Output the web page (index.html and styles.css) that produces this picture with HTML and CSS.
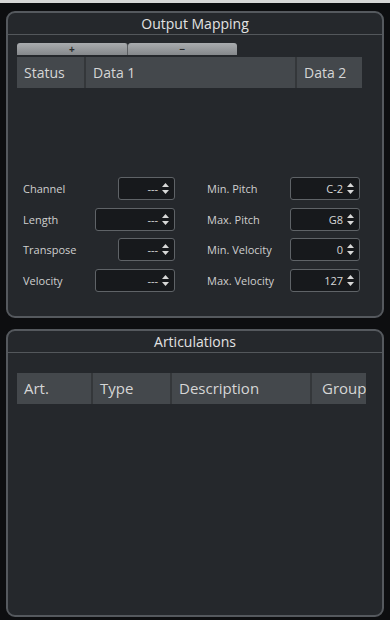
FILE: index.html
```html
<!DOCTYPE html>
<html lang="en">
<head>
  <meta charset="UTF-8">
  <title>Expression Map</title>
  <meta name="viewport" content="width=device-width, initial-scale=1.0">
  <link rel="stylesheet" href="styles.css">
</head>
<body>
  <div class="topline"></div>
  <div class="wrap">
    <div class="panel panel-output">
      <div class="panel-title">Output Mapping</div>
      <div class="panel-body">
        <div class="btnbar">
          <button class="tb">+</button>
          <button class="tb">&minus;</button>
        </div>
        <div class="thead thead-out">
          <div class="th c-status">Status</div>
          <div class="th c-data1">Data 1</div>
          <div class="th c-data2">Data 2</div>
        </div>

        <div class="fields">
          <div class="row">
            <span class="lbl">Channel</span>
            <div class="spin w57"><span class="val">---</span><svg class="arr" width="7" height="11" viewBox="0 0 7 11"><path d="M3.5 0 L7 4 L0 4 Z M0 7 L7 7 L3.5 11 Z" fill="#d8d8d8"/></svg></div>
          </div>
          <div class="row">
            <span class="lbl">Min. Pitch</span>
            <div class="spin w70"><span class="val">C-2</span><svg class="arr" width="7" height="11" viewBox="0 0 7 11"><path d="M3.5 0 L7 4 L0 4 Z M0 7 L7 7 L3.5 11 Z" fill="#d8d8d8"/></svg></div>
          </div>
          <div class="row">
            <span class="lbl">Length</span>
            <div class="spin w80"><span class="val">---</span><svg class="arr" width="7" height="11" viewBox="0 0 7 11"><path d="M3.5 0 L7 4 L0 4 Z M0 7 L7 7 L3.5 11 Z" fill="#d8d8d8"/></svg></div>
          </div>
          <div class="row">
            <span class="lbl">Max. Pitch</span>
            <div class="spin w70"><span class="val">G8</span><svg class="arr" width="7" height="11" viewBox="0 0 7 11"><path d="M3.5 0 L7 4 L0 4 Z M0 7 L7 7 L3.5 11 Z" fill="#d8d8d8"/></svg></div>
          </div>
          <div class="row">
            <span class="lbl">Transpose</span>
            <div class="spin w57"><span class="val">---</span><svg class="arr" width="7" height="11" viewBox="0 0 7 11"><path d="M3.5 0 L7 4 L0 4 Z M0 7 L7 7 L3.5 11 Z" fill="#d8d8d8"/></svg></div>
          </div>
          <div class="row">
            <span class="lbl">Min. Velocity</span>
            <div class="spin w70"><span class="val">0</span><svg class="arr" width="7" height="11" viewBox="0 0 7 11"><path d="M3.5 0 L7 4 L0 4 Z M0 7 L7 7 L3.5 11 Z" fill="#d8d8d8"/></svg></div>
          </div>
          <div class="row">
            <span class="lbl">Velocity</span>
            <div class="spin w80"><span class="val">---</span><svg class="arr" width="7" height="11" viewBox="0 0 7 11"><path d="M3.5 0 L7 4 L0 4 Z M0 7 L7 7 L3.5 11 Z" fill="#d8d8d8"/></svg></div>
          </div>
          <div class="row">
            <span class="lbl">Max. Velocity</span>
            <div class="spin w70"><span class="val">127</span><svg class="arr" width="7" height="11" viewBox="0 0 7 11"><path d="M3.5 0 L7 4 L0 4 Z M0 7 L7 7 L3.5 11 Z" fill="#d8d8d8"/></svg></div>
          </div>
        </div>
      </div>
    </div>

    <div class="panel panel-art">
      <div class="panel-title">Articulations</div>
      <div class="panel-body body-art">
        <div class="thead thead-art">
          <div class="th c-art">Art.</div>
          <div class="th c-type">Type</div>
          <div class="th c-desc">Description</div>
          <div class="th c-group">Group</div>
        </div>
      </div>
    </div>
  </div>
</body>
</html>
```

FILE: styles.css
```css
body {
  margin: 0;
  padding: 0;
  background: #0d0e10;
  font-family: "Open Sans", "DejaVu Sans", sans-serif;
  color: #d4d4d4;
  width: 390px;
  height: 620px;
  overflow: hidden;
}
.topline {
  height: 3px;
  background: #d6d6d6;
}
.wrap {
  padding: 8px 0 0 6px;
  display: flex;
  flex-direction: column;
  gap: 11px;
}
.panel {
  width: 374px;
  background: #25282c;
  border: 2px solid #55595e;
  border-radius: 9px;
  overflow: hidden;
}
.panel-output {
  height: 303px;
}
.panel-art {
  height: 284px;
}
.panel-title {
  height: 21px;
  line-height: 21px;
  text-align: center;
  font-size: 14px;
  color: #e2e2e2;
  border-bottom: 1px solid #53575b;
}
.panel-body {
  padding: 8px 0 0 9px;
}
.body-art {
  padding-top: 20px;
}
.btnbar {
  display: flex;
  width: 220px;
  height: 12px;
  margin-bottom: 2px;
}
.tb {
  flex: 1;
  height: 12px;
  padding: 0;
  border: none;
  border-right: 1px solid #5a5d60;
  border-radius: 3px 3px 0 0;
  background: linear-gradient(#a9acaf, #85888b);
  color: #2a2c2e;
  font-family: inherit;
  font-size: 10px;
  font-weight: bold;
  line-height: 10px;
}
.tb:last-child {
  border-right: none;
}
.thead {
  display: flex;
  height: 31px;
  background: #44484c;
}
.thead-out {
  width: 345px;
}
.thead-art {
  width: 349px;
  overflow: hidden;
}
.th {
  flex-shrink: 0;
  line-height: 31px;
  padding-left: 7px;
  font-size: 14px;
  color: #d6d6d6;
  border-right: 2px solid #34373a;
  white-space: nowrap;
  overflow: hidden;
  box-sizing: border-box;
}
.c-status { width: 69px; }
.c-data1 { width: 211px; }
.c-data2 { width: 65px; border-right: none; }
.thead-art .th { font-size: 15px; }
.c-art { width: 76px; }
.c-type { width: 79px; }
.c-desc { width: 140px; }
.c-group { width: 54px; padding-left: 10px; border-right: none; }

.fields {
  margin: 89px 0 0 6px;
  width: 337px;
  display: grid;
  grid-template-columns: 152px 153px;
  column-gap: 32px;
  row-gap: 7.5px;
}
.row {
  display: flex;
  align-items: center;
  height: 23px;
}
.lbl {
  font-size: 11px;
  color: #cfcfcf;
}
.spin {
  margin-left: auto;
  height: 23px;
  box-sizing: border-box;
  border: 1px solid #5f6367;
  border-radius: 3px;
  background: #17191c;
  display: flex;
  align-items: center;
  justify-content: flex-end;
  padding-right: 5px;
  gap: 4px;
}
.w57 { width: 57px; }
.w70 { width: 70px; }
.w80 { width: 80px; }
.val {
  font-size: 11px;
  color: #d8d8d8;
}
.arr {
  display: block;
}
```
